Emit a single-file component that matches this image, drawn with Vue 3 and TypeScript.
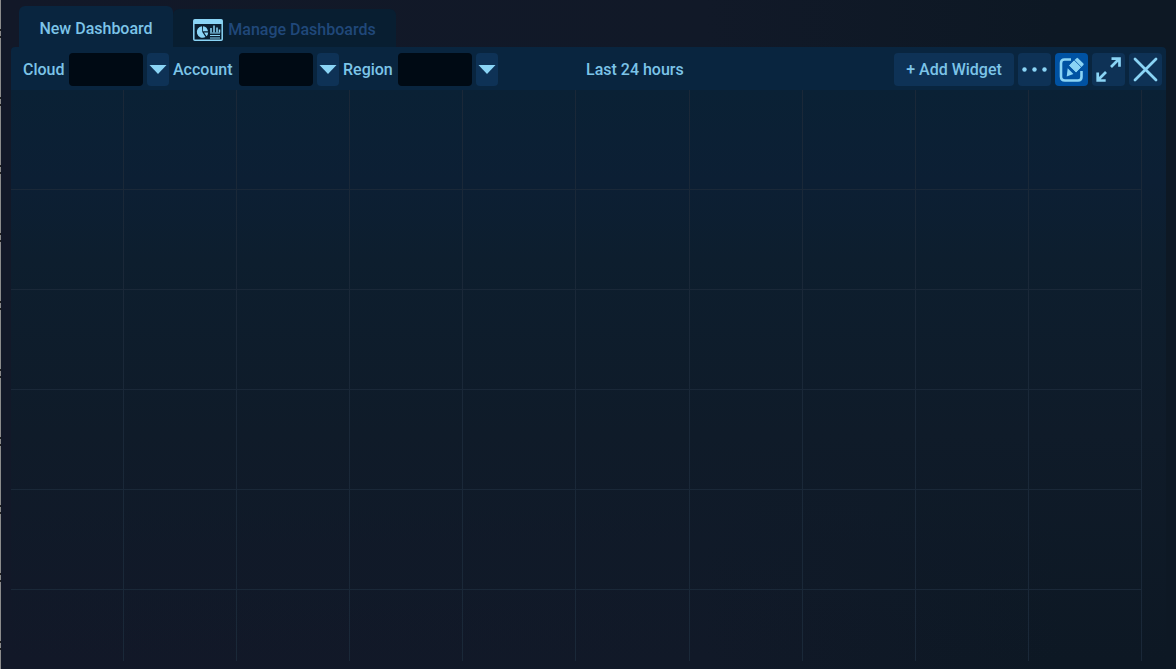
<script setup lang="ts">
import { ref } from 'vue'

interface Filter {
  id: string
  label: string
}

const filters: Filter[] = [
  { id: 'cloud', label: 'Cloud' },
  { id: 'account', label: 'Account' },
  { id: 'region', label: 'Region' },
]
const values = ref<Record<string, string>>({ cloud: '', account: '', region: '' })
const editing = ref(true)
</script>

<template>
  <div class="page">
    <div class="edge"></div>
    <main class="window">
      <nav class="tabs">
        <button type="button" class="tab active">New Dashboard</button>
        <button type="button" class="tab manage">
          <svg width="30" height="22" viewBox="0 0 30 22" aria-hidden="true">
            <rect x=".8" y=".8" width="28.4" height="20.4" rx="1" fill="none" stroke="#8ad4f5" stroke-width="1.5" />
            <path d="M1 1h28v4H1z" fill="#8ad4f5" />
            <path d="M9 7.200a5.800 5.800 0 1 0 3.500 10.800L9.300 13z" fill="#8ad4f5" />
            <path d="M10 7.200a6 6 0 0 1 5 5.100h-5zM11 13.500h4.200a6 6 0 0 1-1.700 3.800z" fill="#8ad4f5" />
            <path d="M18 13.500V9M21 13.500V6.500M24 13.500V8.500M26.500 13.500V10.500" fill="none" stroke="#8ad4f5" stroke-width="1.500" />
            <path d="M17 14h10M17 16.500h10M17 19h10" fill="none" stroke="#8ad4f5" stroke-width="1.200" />
          </svg>
          <span>Manage Dashboards</span>
        </button>
      </nav>

      <section class="panel">
        <header class="toolbar">
          <div v-for="f in filters" :key="f.id" class="filter">
            <label :for="f.id" :class="f.id">{{ f.label }}</label>
            <input :id="f.id" v-model="values[f.id]" type="text" />
            <button type="button" class="drop" :aria-label="`Choose ${f.label}`">
              <svg width="18" height="9" viewBox="0 0 18 9" aria-hidden="true"><path d="M.5 0h17L9 9z" fill="#8ad4f5" /></svg>
            </button>
          </div>
          <button type="button" class="range">Last 24 hours</button>
          <div class="actions">
            <button type="button" class="add">+ Add Widget</button>
            <button type="button" class="icon" aria-label="More">
              <svg width="33" height="33" viewBox="0 0 33 33" aria-hidden="true">
                <g fill="#8ad4f5"><circle cx="6.500" cy="16.500" r="2.200" /><circle cx="16.500" cy="16.500" r="2.200" /><circle cx="26.500" cy="16.500" r="2.200" /></g>
              </svg>
            </button>
            <button type="button" class="icon" :class="{ on: editing }" :aria-pressed="editing" aria-label="Edit" @click="editing = !editing">
              <svg width="33" height="33" viewBox="0 0 33 33" aria-hidden="true">
                <path d="M16 6.500H9.500Q6 6.500 6 10V23.500Q6 27.500 10 27.500H23Q26.500 27.500 26.500 24V18" fill="none" stroke="#8ad4f5" stroke-width="2.600" />
                <path d="M21.500 5.200q.8-.7 1.500 0l5.400 5.300q.7.800 0 1.500l-1.900 1.900-6.900-6.800zM18.900 7.800l6.800 6.800-4.600 4.600-6.800-6.800zM12.700 15.200l5.700 5.700-6.700 2.500z" fill="#8ad4f5" />
                <path d="M19.200 7.500l6.800 6.800-5 5-6.800-6.800z" fill="#8ad4f5" />
              </svg>
            </button>
            <button type="button" class="icon" aria-label="Full screen">
              <svg width="33" height="33" viewBox="0 0 33 33" aria-hidden="true">
                <path d="M19.500 5.700h8v8M27 6l-8 8M5.700 19.500v8h8M6 27l8-8" fill="none" stroke="#8ad4f5" stroke-width="2.700" />
              </svg>
            </button>
            <button type="button" class="icon" aria-label="Close">
              <svg width="33" height="33" viewBox="0 0 33 33" aria-hidden="true">
                <path d="M6 6l21 21M27 6L6 27" fill="none" stroke="#8ad4f5" stroke-width="2.800" stroke-linecap="round" />
              </svg>
            </button>
          </div>
        </header>
        <div class="canvas">
          <div class="board">
            <div v-for="n in 60" :key="n" class="cell"></div>
          </div>
        </div>
      </section>
    </main>
  </div>
</template>

<style>
html,
body,
#app {
  height: 100%;
}
body {
  margin: 0;
  background: #111827;
}
</style>

<style scoped>
* {
  box-sizing: border-box;
}
.page {
  display: flex;
  height: 100%;
  background: linear-gradient(90deg, #121828 0%, #111928 60%, #0d1824 90%);
  font-family: Roboto, "Liberation Sans", sans-serif;
  font-size: 16px;
  font-weight: 500;
  line-height: 20px;
  color: #7cc4e8;
}
.edge {
  width: 1px;
  background: repeating-linear-gradient(#8b8b8b 0 29px, #222 29px 31px, #8b8b8b 31px 36px, #222 36px 38px, #8b8b8b 38px 68px);
}
.window {
  flex: 1;
  display: flex;
  flex-direction: column;
  padding: 6px 10px 8px;
}
button {
  display: flex;
  align-items: center;
  justify-content: center;
  border: 0;
  margin: 0;
  padding: 0;
  font: inherit;
  color: inherit;
  background: #0e3256;
  border-radius: 4px;
  white-space: nowrap;
}
svg {
  display: block;
  flex: none;
}
.tabs {
  display: flex;
  align-items: flex-end;
  padding-left: 8px;
}
.tab {
  border-radius: 6px 6px 0 0;
}
.active {
  height: 41px;
  width: 154px;
  padding-top: 4px;
  background: #09253f;
}
.manage {
  height: 38px;
  width: 223px;
  padding-top: 4px;
  gap: 5px;
  background: #081e31;
  color: #20487a;
}
.panel {
  flex: 1;
  display: flex;
  flex-direction: column;
}
.toolbar {
  display: flex;
  align-items: center;
  height: 43px;
  padding: 2px 4px 0 12px;
  border-radius: 4px 4px 0 0;
  background: #09253f;
}
.filter {
  display: flex;
  align-items: center;
  gap: 4px;
  margin-right: 4px;
}
label {
  white-space: nowrap;
}
.cloud {
  width: 42px;
}
.account {
  width: 62px;
}
.region {
  width: 51px;
}
input {
  width: 74px;
  height: 33px;
  border: 0;
  padding: 0 8px;
  border-radius: 4px;
  background: #000a14;
  color: inherit;
  font: inherit;
}
.drop {
  width: 22px;
  height: 33px;
}
.range {
  margin-left: 84px;
  background: none;
}
.actions {
  display: flex;
  gap: 4px;
  margin-left: auto;
}
.add {
  width: 120px;
  height: 33px;
}
.icon {
  width: 33px;
  height: 33px;
}
.icon.on {
  background: #0052a3;
}
.canvas {
  flex: 1;
  display: flex;
  padding-right: 24px;
  background: linear-gradient(#0a2135 0%, #0c1f34 16%, #0d1e2e 30%, #0f1b29 60%, rgba(15, 26, 40, 0) 100%);
}
.board {
  flex: 1;
  display: grid;
  grid-template-columns: repeat(10, 1fr);
  grid-template-rows: repeat(5, 100px) 1fr;
}
.cell {
  border-right: 1px solid #1a2838;
  border-bottom: 1px solid #1a2838;
}
.cell:nth-child(n + 51) {
  border-bottom: 0;
}
</style>
